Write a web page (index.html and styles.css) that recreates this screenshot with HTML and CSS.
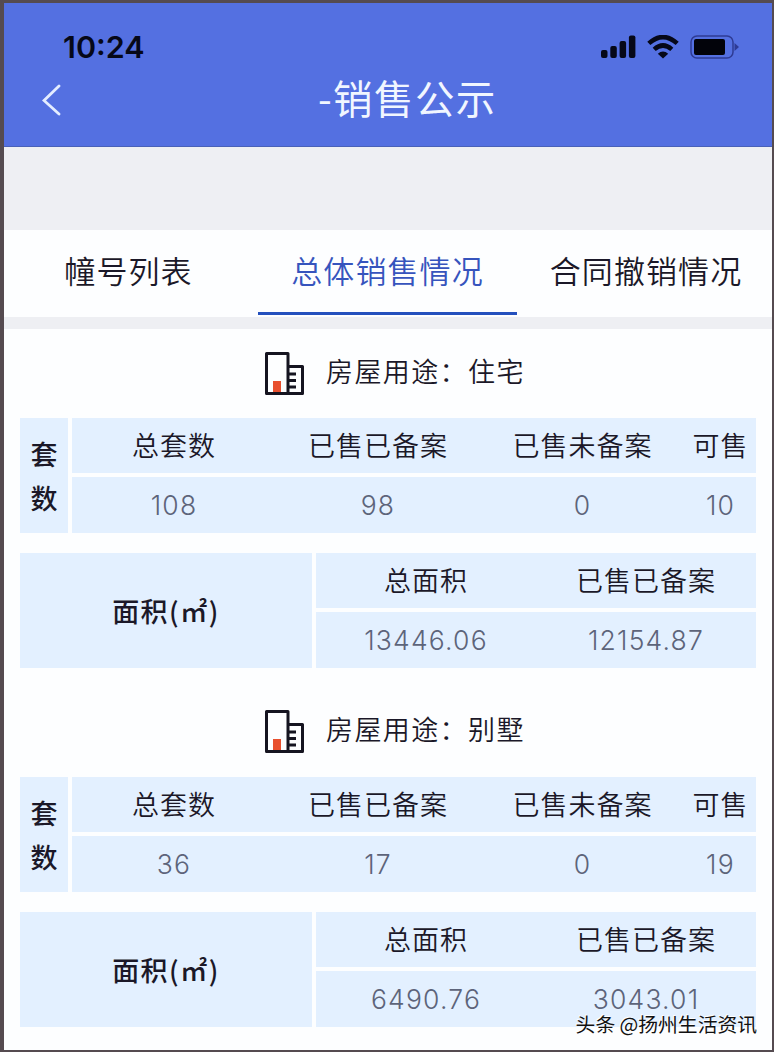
FILE: index.html
```
<!DOCTYPE html>
<html lang="zh-CN">

<head>
    <meta charset="UTF-8">
    <meta name="viewport" content="width=device-width, initial-scale=1.0">
    <title>销售公示</title>
    <link rel="stylesheet" href="styles.css">
</head>

<body>
    <!-- building icon, used by every section title -->
    <svg class="sprite" width="0" height="0">
        <symbol id="building" viewBox="0 0 40 44">
            <rect x="9" y="29" width="8" height="12" fill="#e8502f" />
            <path d="M2.5 1.5H24V41.5H2.5ZM24 14.5H38.5V41.5H24M24 22H32M24 28.5H32M24 35H32" fill="none" stroke="#151420" stroke-width="3" stroke-linejoin="round" />
        </symbol>
    </svg>

    <div class="phone">
        <header>
            <div class="status-bar">
                <span class="time">10:24</span>
                <div class="status-icons">
                    <svg width="35" height="24" viewBox="0 0 35 24" fill="#060818">
                        <rect x="0" y="15" width="6.5" height="8" rx="2" />
                        <rect x="9.3" y="11" width="6.5" height="12" rx="2" />
                        <rect x="18.6" y="6" width="6.5" height="17" rx="2" />
                        <rect x="27.9" y="0.5" width="6.5" height="22.5" rx="2" />
                    </svg>
                    <svg class="wifi" width="32" height="24" viewBox="0 0 32 24" fill="none" stroke="#060818" stroke-width="4.6">
                        <path d="M1.8 8.4Q16 -4.2 30.2 8.4" />
                        <path d="M7.2 14.4Q16 6.6 24.8 14.4" />
                        <path d="M16 23.5L10.8 18.7Q16 14.3 21.2 18.7Z" fill="#060818" stroke="none" />
                    </svg>
                    <svg class="battery" width="50" height="24" viewBox="0 0 50 24">
                        <rect x="1" y="1" width="42" height="22" rx="6" fill="none" stroke="#2e3b94" stroke-width="1.5" />
                        <rect x="4" y="4" width="31" height="16" rx="2" fill="#02030a" />
                        <path d="M44.5 8L49 12L44.5 16Z" fill="#2e3b94" />
                    </svg>
                </div>
            </div>
            <div class="nav-bar">
                <svg class="back" width="20" height="32" viewBox="0 0 20 32" fill="none" stroke="#e4edff" stroke-width="2.8" stroke-linecap="round">
                    <path d="M17 2L2 16.5L17 30" />
                </svg>
                <h1>-销售公示</h1>
            </div>
        </header>

        <nav class="tabs">
            <a class="tab">幢号列表</a>
            <a class="tab active">总体销售情况</a>
            <a class="tab">合同撤销情况</a>
        </nav>

        <main>
            <section>
                <h2><svg class="building" width="40" height="44"><use href="#building" /></svg>房屋用途：住宅</h2>
                <div class="grid units">
                    <div class="side"><span>套</span><span>数</span></div>
                    <div class="row names"><span>总套数</span><span>已售已备案</span><span>已售未备案</span><span>可售</span></div>
                    <div class="row values"><span>108</span><span>98</span><span>0</span><span>10</span></div>
                </div>
                <div class="grid area">
                    <div class="side">面积(㎡)</div>
                    <div class="row names"><span>总面积</span><span>已售已备案</span></div>
                    <div class="row values"><span>13446.06</span><span>12154.87</span></div>
                </div>
            </section>

            <section>
                <h2><svg class="building" width="40" height="44"><use href="#building" /></svg>房屋用途：别墅</h2>
                <div class="grid units">
                    <div class="side"><span>套</span><span>数</span></div>
                    <div class="row names"><span>总套数</span><span>已售已备案</span><span>已售未备案</span><span>可售</span></div>
                    <div class="row values"><span>36</span><span>17</span><span>0</span><span>19</span></div>
                </div>
                <div class="grid area">
                    <div class="side">面积(㎡)</div>
                    <div class="row names"><span>总面积</span><span>已售已备案</span></div>
                    <div class="row values"><span>6490.76</span><span>3043.01</span></div>
                </div>
            </section>
        </main>

        <div class="watermark">头条 @扬州生活资讯</div>
    </div>
</body>

</html>
```

FILE: styles.css
```
* {
    box-sizing: border-box;
}

body {
    margin: 0;
    font-family: "Noto Sans CJK SC", sans-serif;
    font-weight: 350;
    color: #1b1828;
}

.sprite {
    display: block;
}

.phone {
    position: relative;
    height: 1052px;
    overflow: hidden;
    border: solid #554b50;
    border-width: 3px 2px 2px 4px;
    background-color: #fdfeff;
}

header {
    height: 144px;
    background-color: #5470e1;
    border-bottom: 1px solid #4961b8;
}

.status-bar {
    display: flex;
    justify-content: space-between;
    padding: 27px 32px 0 59px;
    height: 66px;
}

.time {
    font-family: Inter, sans-serif;
    font-size: 30.5px;
    font-weight: 600;
    line-height: 34px;
    color: #060818;
}

.status-icons {
    display: flex;
    padding-top: 5px;
}

.wifi {
    margin-left: 11px;
}

.battery {
    margin-left: 11px;
}

.nav-bar {
    display: flex;
    align-items: center;
    height: 62px;
    padding-left: 38px;
}

h1 {
    flex: 1;
    margin: 0 0 7px 256px;
    font-size: 39.5px;
    font-weight: 400;
    letter-spacing: 1.4px;
    line-height: 55px;
    color: #f1f6ff;
}

.tabs {
    display: grid;
    grid-template-columns: 254px 259px 1fr;
    height: 182px;
    border: solid #eeeff3;
    border-width: 83px 0 12px;
}

.tab {
    padding-top: 16px;
    font-size: 31px;
    line-height: 48px;
    letter-spacing: 1.1px;
    text-align: center;
    border-bottom: 3px solid transparent;
    height: 85px;
}

.tab:first-child {
    padding-right: 5px;
}

.tab:last-child {
    padding-left: 3px;
}

.tab.active {
    color: #3654bd;
    border-color: #2450bd;
}

main {
    padding: 0 16px;
}

section {
    height: 358px;
}

h2 {
    display: flex;
    align-items: center;
    margin: 0;
    padding: 0 0 7px 244px;
    height: 89px;
    font-size: 27px;
    font-weight: 350;
    letter-spacing: 1.4px;
}

section:last-child h2 {
    height: 90px;
}

.building {
    margin: 7px 22px 0 0;
}

.grid {
    display: grid;
    grid-template-rows: 55px 56px;
    gap: 4px;
    margin-bottom: 20px;
}

.units {
    grid-template-columns: 48px 684px;
}

.area {
    grid-template-columns: 292px 440px;
}

.side,
.row {
    background-color: #e3f0ff;
}

.side {
    grid-row: span 2;
    display: flex;
    flex-direction: column;
    align-items: center;
    justify-content: center;
    font-size: 27px;
    font-weight: 500;
    line-height: 44px;
}

.area .side {
    letter-spacing: 1.5px;
}

.row {
    display: grid;
    align-items: center;
    text-align: center;
}

.units .row {
    grid-template-columns: 204px 204px 205px 71px;
}

.area .row {
    grid-template-columns: 1fr 1fr;
}

.names {
    padding-bottom: 1px;
    font-size: 27px;
    letter-spacing: 1px;
    line-height: 40px;
}

.values {
    font-family: Inter, sans-serif;
    font-size: 26.5px;
    font-weight: 300;
    letter-spacing: 1.2px;
    color: #5d647a;
}

.watermark {
    position: absolute;
    right: 15px;
    bottom: 12px;
    font-size: 19.8px;
    font-weight: 400;
    line-height: 28px;
    color: #111;
    text-shadow: -1px -1px 0 #fff;
}
```
